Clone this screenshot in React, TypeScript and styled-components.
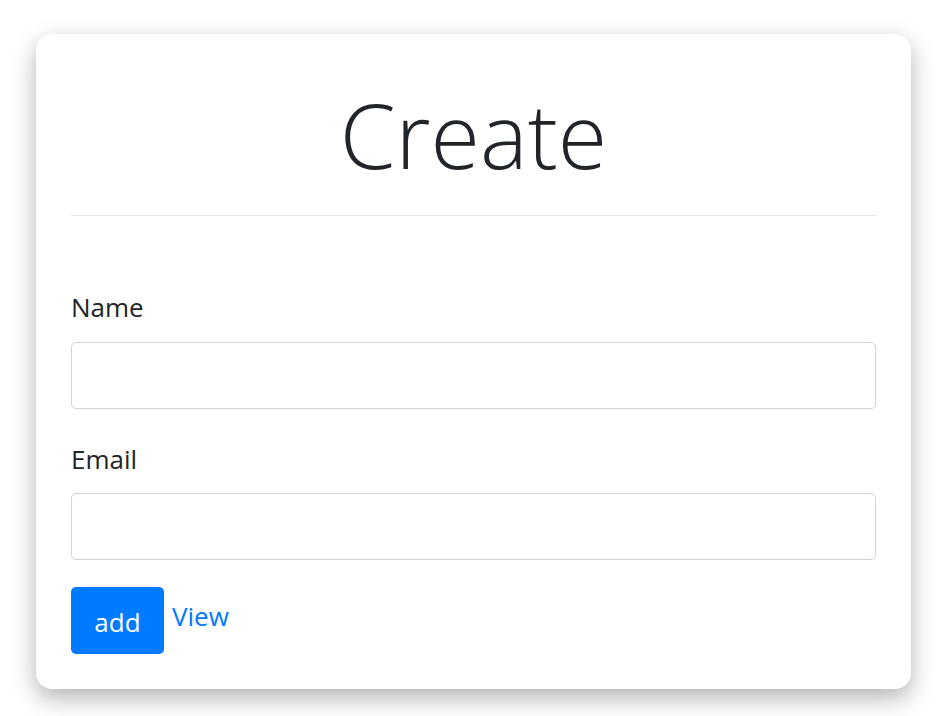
import styled, { createGlobalStyle } from "styled-components";

const GlobalStyle = createGlobalStyle`
  body {
    margin: 0;
    background: #ffffff;
    font-family: "Open Sans", "Liberation Sans", sans-serif;
    color: #212529;
  }
  * {
    box-sizing: border-box;
  }
`;

const Page = styled.div`
  padding: 34px 30px 27px 36px;
`;

const Card = styled.div`
  width: 875px;
  background: #ffffff;
  border-radius: 16px;
  padding: 35px;
  box-shadow: 0 9px 24px rgba(0, 0, 0, 0.3);
`;

const Title = styled.h1`
  margin: 11px 0 0;
  font-size: 90px;
  font-weight: 300;
  line-height: 1.2;
  text-align: center;
  color: #212529;
`;

const Divider = styled.hr`
  margin: 27px 0 0;
  border: 0;
  border-top: 1px solid #e5e5e5;
`;

const Form = styled.form`
  display: flex;
  flex-direction: column;
  padding-top: 72px;
`;

const Label = styled.label<{ $first?: boolean }>`
  font-size: 26px;
  line-height: 39px;
  margin-top: ${(p) => (p.$first ? "0" : "31px")};
  margin-bottom: ${(p) => (p.$first ? "15px" : "14px")};
`;

const Input = styled.input`
  height: 67px;
  width: 100%;
  border: 1px solid #ced4da;
  border-radius: 5px;
  padding: 0 18px;
  font-size: 26px;
  font-family: inherit;
  outline: none;
`;

const Actions = styled.div`
  display: flex;
  align-items: flex-start;
  gap: 8px;
  margin-top: 27px;
`;

const Button = styled.button`
  width: 93px;
  height: 67px;
  border: none;
  border-radius: 5px;
  background: #007bff;
  color: #ffffff;
  font-family: inherit;
  font-size: 26px;
  padding: 2px 0 0;
  cursor: pointer;
`;

const Link = styled.a`
  color: #007bff;
  font-size: 26px;
  line-height: 39px;
  margin-top: 10px;
  text-decoration: none;
`;

export default function App() {
  return (
    <Page>
      <GlobalStyle />
      <Card>
        <Title>Create</Title>
        <Divider />
        <Form onSubmit={(e) => e.preventDefault()}>
          <Label $first htmlFor="name">
            Name
          </Label>
          <Input id="name" type="text" />
          <Label htmlFor="email">Email</Label>
          <Input id="email" type="email" />
          <Actions>
            <Button type="submit">add</Button>
            <Link href="#">View</Link>
          </Actions>
        </Form>
      </Card>
    </Page>
  );
}
